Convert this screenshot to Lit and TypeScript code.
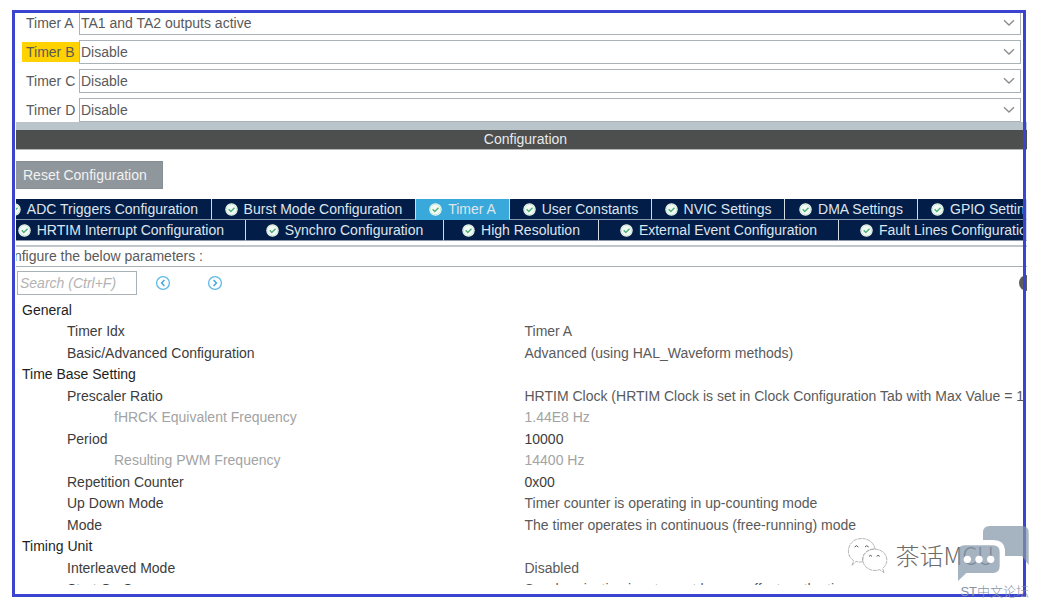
import { LitElement, html, css, svg } from "lit";
import { customElement, property } from "lit/decorators.js";
import { classMap } from "lit/directives/class-map.js";

interface Row {
  name: string;
  level: number;
  value?: string;
  muted?: boolean;
  strong?: boolean;
}

const TIMERS = [
  { id: "a", label: "Timer A", value: "TA1 and TA2 outputs active" },
  { id: "b", label: "Timer B", value: "Disable", marked: true },
  { id: "c", label: "Timer C", value: "Disable" },
  { id: "d", label: "Timer D", value: "Disable" },
];

const TABS_TOP = [
  "ADC Triggers Configuration",
  "Burst Mode Configuration",
  "Timer A",
  "User Constants",
  "NVIC Settings",
  "DMA Settings",
  "GPIO Settings",
];

const TABS_BOTTOM = [
  "HRTIM Interrupt Configuration",
  "Synchro Configuration",
  "High Resolution",
  "External Event Configuration",
  "Fault Lines Configuration",
];

const ROWS: Row[] = [
  { name: "General", level: 0 },
  { name: "Timer Idx", level: 1, value: "Timer A" },
  { name: "Basic/Advanced Configuration", level: 1, value: "Advanced (using HAL_Waveform methods)" },
  { name: "Time Base Setting", level: 0 },
  {
    name: "Prescaler Ratio",
    level: 1,
    value: "HRTIM Clock (HRTIM Clock is set in Clock Configuration Tab with Max Value = 144 MHz)",
  },
  { name: "fHRCK Equivalent Frequency", level: 2, value: "1.44E8 Hz", muted: true },
  { name: "Period", level: 1, value: "10000", strong: true },
  { name: "Resulting PWM Frequency", level: 2, value: "14400 Hz", muted: true },
  { name: "Repetition Counter", level: 1, value: "0x00", strong: true },
  { name: "Up Down Mode", level: 1, value: "Timer counter is operating in up-counting mode" },
  { name: "Mode", level: 1, value: "The timer operates in continuous (free-running) mode" },
  { name: "Timing Unit", level: 0 },
  { name: "Interleaved Mode", level: 1, value: "Disabled" },
  { name: "Start On Sync", level: 1, value: "Synchronization input event has no effect on the timer" },
];

@customElement("config-tab")
export class ConfigTab extends LitElement {
  @property() label = "";
  @property({ type: Boolean, reflect: true }) active = false;

  static styles = css`
    :host {
      display: flex;
      min-width: 0;
    }
    .tab {
      flex: 1;
      min-width: 0;
      display: flex;
      align-items: center;
      justify-content: var(--tab-align, center);
      gap: 6px;
      padding: 0 var(--tab-end, 0) 0 var(--tab-start, 0);
      border: 0;
      border-right: 1px solid #d5dbe2;
      border-bottom: 1px solid #8b98ab;
      background: #031d49;
      color: #dfe5ec;
      font: inherit;
      line-height: 18px;
      white-space: nowrap;
      overflow: hidden;
    }
    .active {
      background: #39a9dc;
      border-bottom-color: #39a9dc;
    }
    svg {
      flex: none;
    }
  `;

  render() {
    return html`<button
      type="button"
      role="tab"
      aria-selected=${this.active ? "true" : "false"}
      class=${classMap({ tab: true, active: this.active })}
    >
      <svg width="13" height="13" viewBox="0 0 13 13" aria-hidden="true">
        <circle cx="6.5" cy="6.5" r="6.2" fill="#f4fbf6" />
        <circle cx="6.5" cy="6.5" r="5.2" fill="none" stroke="#a9dcbc" stroke-width="0.6" />
        <path d="M3.7 6.3l2.1 2.1 3.7-3.7" fill="none" stroke="#4bb078" stroke-width="1.4" />
      </svg>
      <span>${this.label}</span>
    </button>`;
  }
}

@customElement("app-root")
export class AppRoot extends LitElement {
  static styles = css`
    :host {
      display: flex;
      box-sizing: border-box;
      height: 100vh;
      padding: 10px 11px 11px 12px;
      background: #fff;
      color: #5a5a5a;
      font: 14px/20px "Liberation Sans", Arial, sans-serif;
    }
    * {
      box-sizing: border-box;
    }
    .frame {
      position: relative;
      flex: 1;
      min-width: 0;
      display: flex;
      flex-direction: column;
      padding-left: 4px;
    }
    .outline {
      position: absolute;
      inset: 0;
      border: 3px solid #3b44cf;
      pointer-events: none;
    }
    .wide {
      margin-right: -1px;
    }
    .timers {
      display: flex;
      flex-direction: column;
      gap: 5px;
      padding: 1px 5px 0 6px;
      background: #fff;
    }
    .timer {
      display: flex;
      align-items: center;
      height: 24px;
    }
    .timer label {
      width: 57px;
      padding-left: 4px;
      white-space: nowrap;
    }
    .timer .marked {
      background: #ffd200;
    }
    .picker {
      flex: 1;
      display: grid;
      align-items: center;
    }
    .picker select {
      grid-area: 1 / 1;
      appearance: none;
      width: 100%;
      height: 24px;
      padding: 0 24px 0 1px;
      border: 1px solid #a9b2b7;
      border-radius: 0;
      background: #fff;
      color: inherit;
      font: inherit;
      outline: 0;
    }
    .picker svg {
      grid-area: 1 / 1;
      justify-self: end;
      margin-right: 6px;
      pointer-events: none;
    }
    .strip {
      height: 8px;
      background: #b9c5cb;
    }
    h1 {
      margin: 0;
      padding-left: 8px;
      border-bottom: 1px solid #b5b7b6;
      background: #4c4f4e;
      color: #e9e9e9;
      font: inherit;
      line-height: 19px;
      text-align: center;
    }
    .reset {
      align-self: flex-start;
      margin: 11px 0 10px;
      padding: 3px 15px 3px 7px;
      border: 1px solid #868f94;
      border-left: 0;
      background: #8f979c;
      color: #f2f2f2;
      font: inherit;
    }
    .tabs {
      display: grid;
      grid-template-rows: 21px;
      background: #031d49;
    }
    .tabs-top {
      grid-template-columns: 196fr 204fr 94fr 142fr 133fr 133fr 109fr;
    }
    .tabs-bottom {
      grid-template-columns: 230fr 198fr 155fr 240fr 188fr;
    }
    .tabs config-tab:first-child {
      --tab-align: flex-end;
      --tab-end: 13px;
    }
    .tabs-bottom config-tab:first-child {
      --tab-end: 21px;
    }
    .tabs config-tab:last-child {
      --tab-align: flex-start;
      --tab-start: 13px;
    }
    .tabs-bottom config-tab:last-child {
      --tab-start: 21px;
    }
    .hint {
      margin: 4px -1px 0 0;
      border-top: 2px solid #c0c7cb;
      border-bottom: 1px solid #aab1b5;
      line-height: 19px;
      overflow: hidden;
      white-space: nowrap;
    }
    .hint span {
      margin-left: -20px;
    }
    .tools {
      display: flex;
      align-items: center;
      margin: 4px -1px 0 1px;
    }
    .tools input {
      width: 120px;
      height: 24px;
      margin: 0;
      padding: 0 2px;
      border: 1px solid #a9b2b7;
      background: #fff;
      color: inherit;
      font: inherit;
      outline: 0;
    }
    .tools input::placeholder {
      color: #b3b3b3;
      font-style: italic;
      opacity: 1;
    }
    .round {
      display: flex;
      margin-left: 18px;
      padding: 0;
      border: 0;
      background: none;
    }
    .round svg {
      flex: none;
    }
    .round + .round {
      margin-left: 36px;
    }
    .tools .info {
      width: 8px;
      margin-left: auto;
      overflow: hidden;
    }
    .list {
      flex: 1;
      min-height: 0;
      margin: 4px 3px 12px 0;
      overflow: hidden;
    }
    table {
      width: 100%;
      table-layout: fixed;
      border-collapse: collapse;
    }
    .name-col {
      width: 50%;
    }
    tr {
      height: 21px;
    }
    tr:nth-child(even) {
      height: 22px;
    }
    th,
    td {
      padding: 0;
      font-weight: normal;
      text-align: left;
      white-space: nowrap;
      overflow: hidden;
    }
    th {
      color: #3c3c3c;
    }
    td {
      padding-left: 5px;
    }
    .level-0 {
      padding-left: 6px;
      color: #1e1e1e;
    }
    .level-1 {
      padding-left: 51px;
    }
    .level-2 {
      padding-left: 98px;
    }
    .muted th,
    .muted td {
      color: #a3a3a3;
    }
    .strong td {
      color: #3c3c3c;
    }
    .author {
      position: absolute;
      right: 32px;
      bottom: 24px;
      display: flex;
      align-items: center;
      gap: 7px;
      color: #6b6b6b;
      font: 300 24px/36px "Noto Sans CJK SC", sans-serif;
    }
    .forum {
      position: absolute;
      right: -3px;
      bottom: -5px;
      display: flex;
      flex-direction: column;
      align-items: flex-end;
      color: #8794a8;
      font: 300 13px/20px "Liberation Sans", "Noto Sans CJK SC", sans-serif;
      white-space: nowrap;
    }
  `;

  private chevron() {
    return html`<svg width="12" height="8" viewBox="0 0 12 8" aria-hidden="true">
      <path d="M1 1.2L6 6L11 1.2" fill="none" stroke="#8c8c8c" stroke-width="1.3" />
    </svg>`;
  }

  private arrow(path: string) {
    return svg`<svg width="16" height="16" viewBox="0 0 16 16" aria-hidden="true">
      <circle cx="8" cy="8" r="6.4" fill="none" stroke="#5db9e4" stroke-width="1.3" />
      <path d=${path} fill="none" stroke="#3fa9dc" stroke-width="1.5" />
    </svg>`;
  }

  render() {
    return html`
      <main class="frame">
        <section class="timers">
          ${TIMERS.map(
            (t) => html`<div class="timer">
              <label for=${t.id} class=${classMap({ marked: !!t.marked })}>${t.label}</label>
              <div class="picker">
                <select id=${t.id}>
                  <option>${t.value}</option>
                </select>
                ${this.chevron()}
              </div>
            </div>`
          )}
        </section>
        <div class="strip wide"></div>
        <h1 class="wide">Configuration</h1>
        <button type="button" class="reset">Reset Configuration</button>
        <div class="tabs tabs-top wide" role="tablist">
          ${TABS_TOP.map((t) => html`<config-tab .label=${t} ?active=${t === "Timer A"}></config-tab>`)}
        </div>
        <div class="tabs tabs-bottom wide" role="tablist">
          ${TABS_BOTTOM.map((t) => html`<config-tab .label=${t}></config-tab>`)}
        </div>
        <div class="hint"><span>Configure the below parameters :</span></div>
        <div class="tools">
          <input type="search" placeholder="Search (Ctrl+F)" aria-label="Search" />
          <button type="button" class="round" aria-label="Previous">${this.arrow("M9.4 5L6.6 8L9.4 11")}</button>
          <button type="button" class="round" aria-label="Next">${this.arrow("M6.6 5L9.4 8L6.6 11")}</button>
          <button type="button" class="round info" aria-label="Information">
            <svg width="16" height="16" viewBox="0 0 16 16" aria-hidden="true">
              <circle cx="8" cy="8" r="8" fill="#5c5c5c" />
            </svg>
          </button>
        </div>
        <div class="list">
          <table>
            <colgroup>
              <col class="name-col" />
              <col />
            </colgroup>
            <tbody>
              ${ROWS.map(
                (r) => html`<tr class=${classMap({ muted: !!r.muted, strong: !!r.strong })}>
                  <th scope="row" class="level-${r.level}">${r.name}</th>
                  <td>${r.value ?? ""}</td>
                </tr>`
              )}
            </tbody>
          </table>
        </div>
        <div class="outline"></div>
        <div class="author">
          <svg width="41" height="36" viewBox="69 75 123 108" aria-hidden="true">
            <g fill="#fff" stroke="#9a9a9a" stroke-width="2.2" stroke-dasharray="12 2">
              <path d="M84 160l5-14C64 130 70 92 98 82c26-8 52 6 55 29-20-1-40 14-37 38-8 2-14 1-20-1z" />
              <path d="M180 182l-4-13c16-12 17-35 1-49-18-14-46-10-57 8-10 22 3 43 27 47 8 1 14 0 20-2z" />
            </g>
            <g fill="none" stroke="#555" stroke-width="3">
              <path d="M92 105q5-8 11 0M123 105q5-8 11 0M135 133q4-6 9 0M158 133q4-6 9 0" />
            </g>
          </svg>
          <span>茶话MCU</span>
        </div>
        <div class="forum">
          <svg width="72" height="57" viewBox="412 42 216 171" aria-hidden="true">
            <g fill="#8496a9" fill-opacity="0.72">
              <path d="M510 45H607Q627 45 627 65V162L607 135H556V115Q553 88 522 87H490V65Q490 45 510 45Z" />
              <path d="M435 103H520Q540 103 540 123V166Q540 186 520 186H440L415 210V123Q415 103 435 103Z" />
            </g>
            <g fill="#fff">
              <circle cx="443" cy="145" r="11" />
              <circle cx="478" cy="145" r="11" />
              <circle cx="513" cy="145" r="11" />
            </g>
          </svg>
          <span>ST中文论坛</span>
        </div>
      </main>
    `;
  }
}
